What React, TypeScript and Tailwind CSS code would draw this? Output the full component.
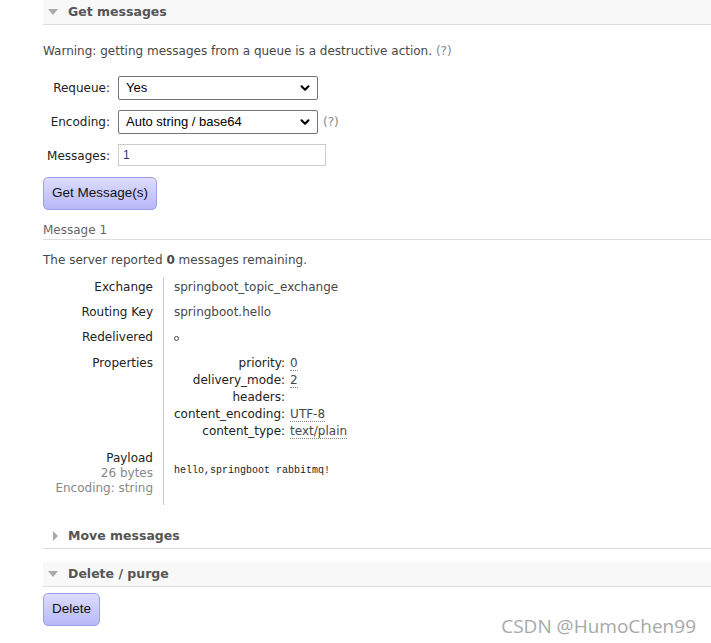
import { ChevronDown } from "lucide-react";

function SectionHeader({ title, open, shaded }: { title: string; open: boolean; shaded: boolean }) {
  return (
    <div
      className={`flex h-[25px] items-center border-b border-[#dddddd] pl-[5px] ${
        shaded ? "bg-[#f8f8f8]" : "bg-white"
      }`}
    >
      {open ? (
        <span className="mr-[10px] h-0 w-0 border-x-[5px] border-t-[6px] border-x-transparent border-t-[#aaaaaa]" />
      ) : (
        <span className="ml-[5px] mr-[10px] h-0 w-0 border-y-[5px] border-l-[5px] border-y-transparent border-l-[#aaaaaa]" />
      )}
      <span className="text-[12.5px] font-bold text-[#555555]">{title}</span>
    </div>
  );
}

function SelectBox({ value }: { value: string }) {
  return (
    <div className="flex h-[24px] w-[200px] items-center justify-between rounded-[2px] border border-[#767676] bg-white pl-[7px] pr-[5px] font-['Liberation_Sans',Arial,sans-serif] text-[13px] text-black">
      <span>{value}</span>
      <ChevronDown size={14} strokeWidth={3.5} className="text-black" />
    </div>
  );
}

function Abbr({ children }: { children: string }) {
  return <span className="border-b border-dotted border-[#888888] leading-[13px]">{children}</span>;
}

const props: [string, string | null][] = [
  ["priority:", "0"],
  ["delivery_mode:", "2"],
  ["headers:", null],
  ["content_encoding:", "UTF-8"],
  ["content_type:", "text/plain"],
];

export default function App() {
  return (
    <div className="relative h-[643px] w-[711px] overflow-hidden bg-white pl-[43px] font-['DejaVu_Sans',Verdana,sans-serif] text-[12px] text-[#484848]">
      <SectionHeader title="Get messages" open shaded />

      <p className="mt-[18px] leading-[16px]">
        Warning: getting messages from a queue is a destructive action.{" "}
        <span className="text-[#888888]">(?)</span>
      </p>

      <div className="mt-[17px] flex flex-col">
        <div className="flex items-center">
          <label className="w-[75px] pr-[8px] text-right text-[#222222]">Requeue:</label>
          <SelectBox value="Yes" />
        </div>
        <div className="mt-[10px] flex items-center">
          <label className="w-[75px] pr-[8px] text-right text-[#222222]">Encoding:</label>
          <SelectBox value="Auto string / base64" />
          <span className="ml-[5px] text-[#888888]">(?)</span>
        </div>
        <div className="mt-[10px] flex items-center">
          <label className="w-[75px] pr-[8px] pt-[2px] text-right text-[#222222]">Messages:</label>
          <div className="flex h-[22px] w-[208px] items-center border border-[#cccccc] px-[4px] font-['Liberation_Sans',Arial,sans-serif] text-[12px] text-[#1a3a7a]">
            1
          </div>
        </div>
      </div>

      <button className="mt-[11px] h-[33px] rounded-[5px] border border-[#9e9ee6] bg-gradient-to-b from-[#dcdcff] to-[#b8b8f8] px-[8px] font-['Liberation_Sans',Arial,sans-serif] text-[13.5px] text-[#111111]">
        Get Message(s)
      </button>

      <div className="mt-[12px] border-b border-[#dddddd] pb-[1px] leading-[16px] text-[#666666]">Message 1</div>

      <p className="mt-[12px] leading-[16px]">
        The server reported <span className="font-bold">0</span> messages remaining.
      </p>

      <div className="mt-[9px] grid grid-cols-[120px_1fr]">
        <div className="flex flex-col items-end pr-[10px] pt-[2px] text-[#222222]">
          <div className="h-[25px] leading-[16px]">Exchange</div>
          <div className="h-[25px] leading-[16px]">Routing Key</div>
          <div className="h-[26px] leading-[16px]">Redelivered</div>
          <div className="h-[96px] leading-[16px]">Properties</div>
          <div className="leading-[15px]">Payload</div>
          <div className="leading-[15px] text-[#888888]">26 bytes</div>
          <div className="leading-[15px] text-[#888888]">Encoding: string</div>
        </div>
        <div className="flex h-[228px] flex-col border-l border-[#cccccc] pl-[10px] pt-[2px]">
          <div className="h-[25px] leading-[16px]">springboot_topic_exchange</div>
          <div className="h-[25px] leading-[16px]">springboot.hello</div>
          <div className="flex h-[26px] items-start pt-[7px]">
            <span className="h-[5px] w-[5px] rounded-full border border-[#484848]" />
          </div>
          <div className="grid h-[96px] grid-cols-[auto_auto] content-start justify-start gap-x-[5px]">
            {props.map(([k, v]) => (
              <div key={k} className="contents">
                <div className="h-[17px] text-right leading-[16px] text-[#222222]">{k}</div>
                <div className="h-[17px] leading-[16px]">{v ? <Abbr>{v}</Abbr> : null}</div>
              </div>
            ))}
          </div>
          <div className="pt-[12px] font-['Liberation_Mono','DejaVu_Sans_Mono',monospace] text-[10px] text-[#222222]">
            hello,springboot rabbitmq!
          </div>
        </div>
      </div>

      <div className="mt-[19px]">
        <SectionHeader title="Move messages" open={false} shaded={false} />
      </div>
      <div className="mt-[13px]">
        <SectionHeader title="Delete / purge" open shaded />
      </div>

      <button className="mt-[6px] h-[33px] rounded-[5px] border border-[#9e9ee6] bg-gradient-to-b from-[#dcdcff] to-[#b8b8f8] px-[8px] font-['Liberation_Sans',Arial,sans-serif] text-[13.5px] text-[#111111]">
        Delete
      </button>

      <div className="absolute bottom-[3px] right-[15px] font-['Open_Sans',sans-serif] text-[19px] text-[#a8a8a8]">
        CSDN @HumoChen99
      </div>
    </div>
  );
}
